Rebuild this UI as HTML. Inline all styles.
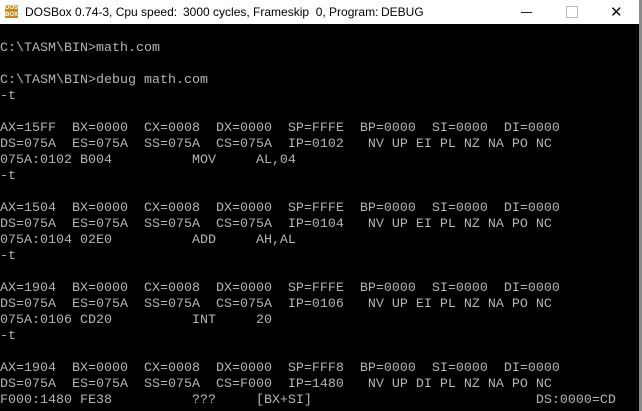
<!DOCTYPE html>
<html><head><style>
html,body{margin:0;padding:0;background:#000;width:642px;height:411px;overflow:hidden}
#title{position:absolute;left:0;top:0;width:642px;height:24px;background:#fff;font-family:"Liberation Sans",sans-serif;font-size:12px;color:#000;z-index:2}
#title .t{position:absolute;top:5px;white-space:pre}
#icon{position:absolute;left:5px;top:5px;width:13px;height:13px;background:#c8861c;color:#fff;font:bold 6px/6.5px "Liberation Sans",sans-serif;text-align:center}
.ctl{position:absolute;color:#111}
#con{position:absolute;left:0;top:25px;width:640px;height:386px;background:#000}
pre{margin:0;font-family:"Liberation Mono","DejaVu Sans Mono",monospace;font-size:13.33px;line-height:16px;color:#b4b4b4;letter-spacing:0}
#edge{position:absolute;left:639px;top:0;width:3px;height:411px;background:#8a8a8a;z-index:3}
</style></head><body>
<div id="title"><div id="icon">DOS<br>BOX</div>
<div class="t" style="left:25px">DOSBox 0.74-3, Cpu speed:</div>
<div class="t" style="left:183px">3000 cycles, Frameskip&nbsp; 0, Program:</div>
<div class="t" style="left:381px">DEBUG</div>
<div class="ctl" style="left:521px;top:12px;width:11px;height:1px;background:#222"></div>
<div class="ctl" style="left:566px;width:10px;height:10px;border:1px solid #bbb;top:6px"></div>
<div class="ctl" style="left:610px;top:3px;font-size:15px">✕</div>
</div>
<div id="con"><pre>

C:\TASM\BIN>math.com

C:\TASM\BIN>debug math.com
-t

AX=15FF  BX=0000  CX=0008  DX=0000  SP=FFFE  BP=0000  SI=0000  DI=0000
DS=075A  ES=075A  SS=075A  CS=075A  IP=0102   NV UP EI PL NZ NA PO NC
075A:0102 B004          MOV     AL,04
-t

AX=1504  BX=0000  CX=0008  DX=0000  SP=FFFE  BP=0000  SI=0000  DI=0000
DS=075A  ES=075A  SS=075A  CS=075A  IP=0104   NV UP EI PL NZ NA PO NC
075A:0104 02E0          ADD     AH,AL
-t

AX=1904  BX=0000  CX=0008  DX=0000  SP=FFFE  BP=0000  SI=0000  DI=0000
DS=075A  ES=075A  SS=075A  CS=075A  IP=0106   NV UP EI PL NZ NA PO NC
075A:0106 CD20          INT     20
-t

AX=1904  BX=0000  CX=0008  DX=0000  SP=FFF8  BP=0000  SI=0000  DI=0000
DS=075A  ES=075A  SS=075A  CS=F000  IP=1480   NV UP DI PL NZ NA PO NC
F000:1480 FE38          ???     [BX+SI]                            DS:0000=CD
</pre></div>
<div id="edge"></div>
</body></html>
